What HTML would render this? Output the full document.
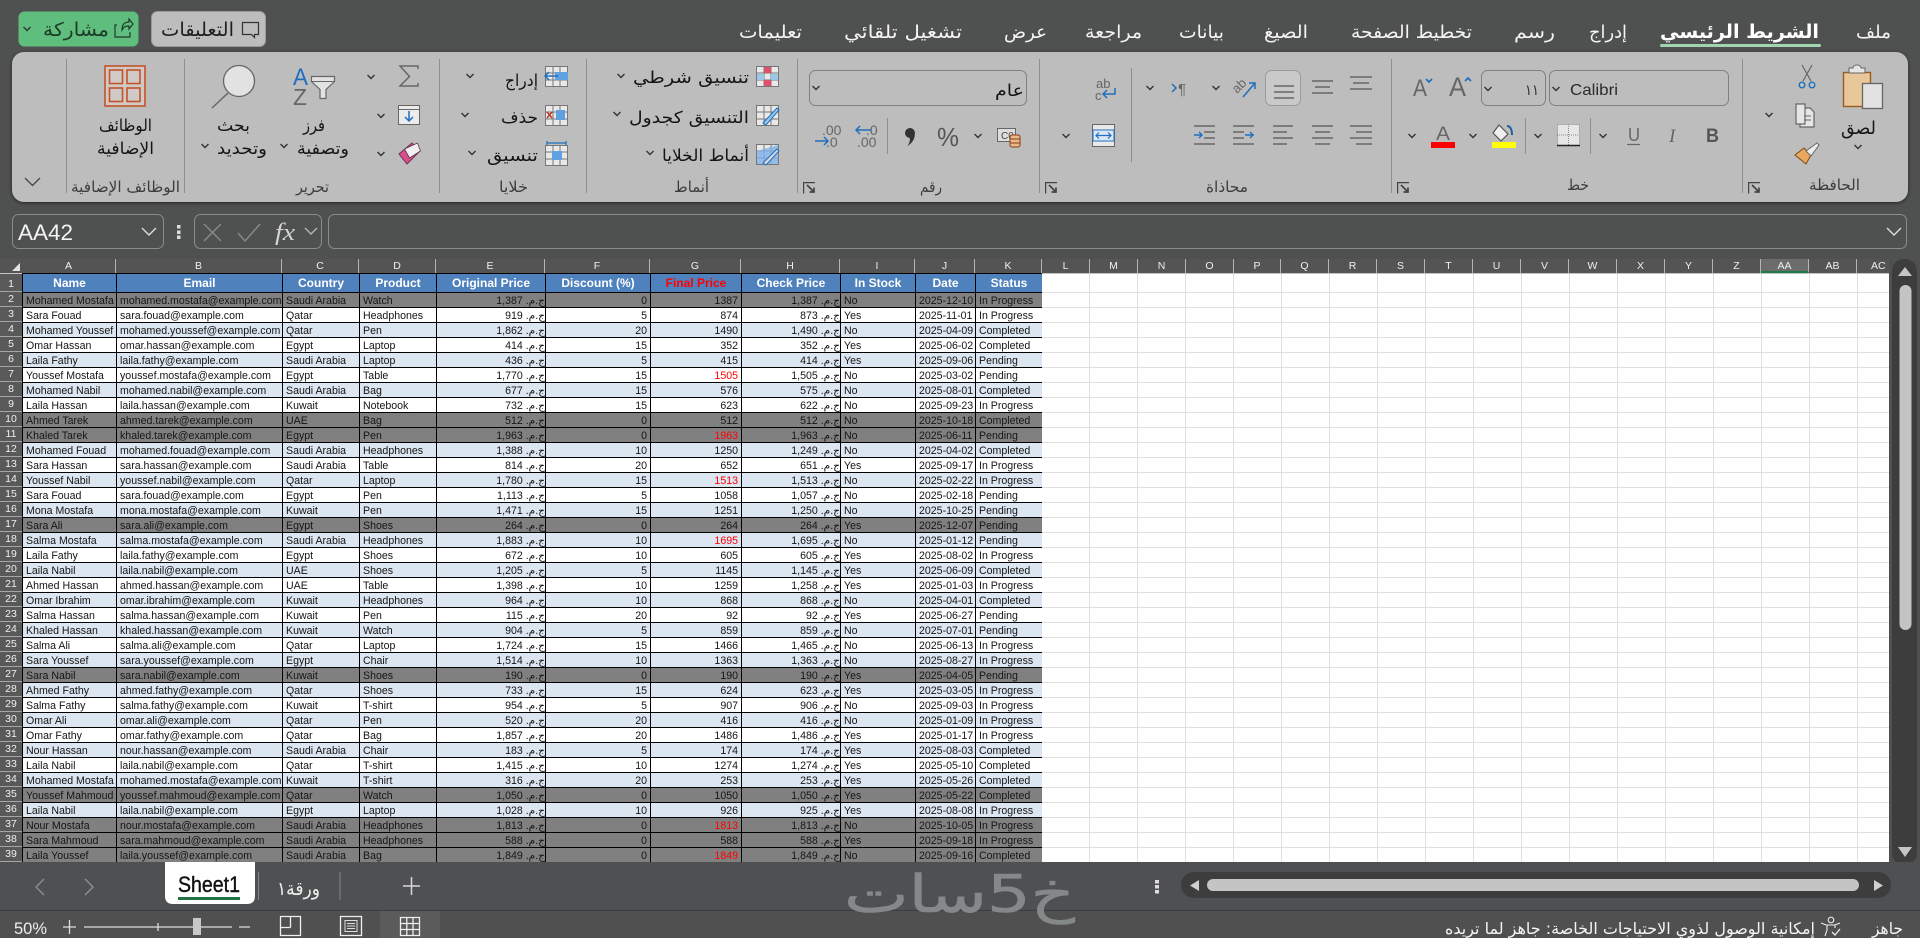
<!DOCTYPE html>
<html lang="ar"><head><meta charset="utf-8"><title>Excel</title>
<style>
html,body{margin:0;padding:0;width:1920px;height:938px;overflow:hidden;background:#4f5050;font-family:"Liberation Sans","DejaVu Sans",sans-serif}
#rib{position:absolute;left:12px;top:52px;width:1896px;height:150px;background:#bdbdbd;border-radius:12px;box-shadow:0 1px 3px #222}
svg{position:absolute;left:0;top:0}
svg text{font-family:"DejaVu Sans",sans-serif}
.w{fill:#f4f4f4;font-size:18px}.k{fill:#151515;font-size:16.5px}.s{fill:#3c3c3c;font-size:15px}
.la{font-family:"Liberation Sans",sans-serif!important}
#rows{position:absolute;left:1042px;top:273px;width:847px;height:589px;background-color:#fff;background-image:linear-gradient(90deg,#e0e0e0 1px,transparent 1px),linear-gradient(#fff,#fff),linear-gradient(#e0e0e0 1px,transparent 1px);background-size:48px 100%,100% 19px,100% 15px;background-position:47px 0,0 0,0 4px;background-repeat:repeat-x,no-repeat,repeat}
#hd{position:absolute;left:0;top:259px;height:14px;width:1889px;background:#545454;overflow:hidden;border-bottom:1px solid #c4c4c4;box-sizing:content-box}
#hd span{position:absolute;top:0;height:14px;line-height:14px;color:#f0f0f0;font-size:10.5px;text-align:center;border-right:1px solid #b5b5b5;box-sizing:border-box}
#rn{position:absolute;left:0;top:274px;width:22px;height:588px;overflow:hidden;background:#595959}
#rn i{display:block;height:15px;box-sizing:border-box;border-bottom:1px solid #a5a5a5;color:#f0f0f0;font:10.5px/15px "Liberation Sans",sans-serif;text-align:center}
#rn i:first-child{height:18px;line-height:20px}
#tw{position:absolute;left:22px;top:273px;width:1020px;height:589px;overflow:hidden}
table{border-collapse:collapse;table-layout:fixed;width:1020px;background:#fff;color:#151515;font:10.6px/12px "Liberation Sans","DejaVu Sans",sans-serif}
td,th{border:1px solid #000;padding:2px 2px 0 3px;height:12px;white-space:nowrap;overflow:hidden}
th{background:#4f81bd;color:#fff;font-size:12px;height:18px;padding:0 2px;line-height:18px;text-align:center;font-weight:bold}
tr{height:15px}
tr:first-child{height:19px}
tr:nth-child(even) td{background:#dce6f1}
tr.g td,tr:nth-child(even).g td{background:#808080}
td:nth-child(5),td:nth-child(8){direction:rtl;text-align:right;padding:2px 0 0 2px}
td:nth-child(6),td:nth-child(7){text-align:right;padding-right:3px}
.x{color:#f00}
</style></head><body>
<div id="rib"></div>

<div id="rows"></div>
<div id="hd">
<span style="left:22px;width:94px">A</span><span style="left:116px;width:166px">B</span><span style="left:282px;width:77px">C</span><span style="left:359px;width:77px">D</span><span style="left:436px;width:109px">E</span><span style="left:545px;width:105px">F</span><span style="left:650px;width:91px">G</span><span style="left:741px;width:99px">H</span><span style="left:840px;width:75px">I</span><span style="left:915px;width:60px">J</span><span style="left:975px;width:67px">K</span><span style="left:1042px;width:48px">L</span><span style="left:1090px;width:48px">M</span><span style="left:1138px;width:48px">N</span><span style="left:1186px;width:48px">O</span><span style="left:1234px;width:47px">P</span><span style="left:1281px;width:48px">Q</span><span style="left:1329px;width:48px">R</span><span style="left:1377px;width:48px">S</span><span style="left:1425px;width:48px">T</span><span style="left:1473px;width:48px">U</span><span style="left:1521px;width:48px">V</span><span style="left:1569px;width:48px">W</span><span style="left:1617px;width:48px">X</span><span style="left:1665px;width:48px">Y</span><span style="left:1713px;width:48px">Z</span><span style="left:1761px;width:48px;background:#6c6c6c;border-bottom:2px solid #1d7a45">AA</span><span style="left:1809px;width:48px">AB</span><span style="left:1857px;width:32px;text-align:left;padding-left:14px;border:0">AC</span>
</div>
<div id="rn"><i>1</i><i>2</i><i>3</i><i>4</i><i>5</i><i>6</i><i>7</i><i>8</i><i>9</i><i>10</i><i>11</i><i>12</i><i>13</i><i>14</i><i>15</i><i>16</i><i>17</i><i>18</i><i>19</i><i>20</i><i>21</i><i>22</i><i>23</i><i>24</i><i>25</i><i>26</i><i>27</i><i>28</i><i>29</i><i>30</i><i>31</i><i>32</i><i>33</i><i>34</i><i>35</i><i>36</i><i>37</i><i>38</i><i>39</i></div>
<div id="tw"><table>
<colgroup><col style="width:94px"><col style="width:166px"><col style="width:77px"><col style="width:77px"><col style="width:109px"><col style="width:105px"><col style="width:91px"><col style="width:99px"><col style="width:75px"><col style="width:60px"><col style="width:67px"></colgroup>
<tr><th>Name<th>Email<th>Country<th>Product<th>Original Price<th>Discount (%)<th style="color:#f00">Final Price<th>Check Price<th>In Stock<th>Date<th>Status
<tr class="g"><td>Mohamed Mostafa<td>mohamed.mostafa@example.com<td>Saudi Arabia<td>Watch<td>ج.م. 1,387<td>0<td>1387<td>ج.م. 1,387<td>No<td>2025-12-10<td>In Progress
<tr><td>Sara Fouad<td>sara.fouad@example.com<td>Qatar<td>Headphones<td>ج.م. 919<td>5<td>874<td>ج.م. 873<td>Yes<td>2025-11-01<td>In Progress
<tr><td>Mohamed Youssef<td>mohamed.youssef@example.com<td>Qatar<td>Pen<td>ج.م. 1,862<td>20<td>1490<td>ج.م. 1,490<td>No<td>2025-04-09<td>Completed
<tr><td>Omar Hassan<td>omar.hassan@example.com<td>Egypt<td>Laptop<td>ج.م. 414<td>15<td>352<td>ج.م. 352<td>Yes<td>2025-06-02<td>Completed
<tr><td>Laila Fathy<td>laila.fathy@example.com<td>Saudi Arabia<td>Laptop<td>ج.م. 436<td>5<td>415<td>ج.م. 414<td>Yes<td>2025-09-06<td>Pending
<tr><td>Youssef Mostafa<td>youssef.mostafa@example.com<td>Egypt<td>Table<td>ج.م. 1,770<td>15<td class="x">1505<td>ج.م. 1,505<td>No<td>2025-03-02<td>Pending
<tr><td>Mohamed Nabil<td>mohamed.nabil@example.com<td>Saudi Arabia<td>Bag<td>ج.م. 677<td>15<td>576<td>ج.م. 575<td>No<td>2025-08-01<td>Completed
<tr><td>Laila Hassan<td>laila.hassan@example.com<td>Kuwait<td>Notebook<td>ج.م. 732<td>15<td>623<td>ج.م. 622<td>No<td>2025-09-23<td>In Progress
<tr class="g"><td>Ahmed Tarek<td>ahmed.tarek@example.com<td>UAE<td>Bag<td>ج.م. 512<td>0<td>512<td>ج.م. 512<td>No<td>2025-10-18<td>Completed
<tr class="g"><td>Khaled Tarek<td>khaled.tarek@example.com<td>Egypt<td>Pen<td>ج.م. 1,963<td>0<td class="x">1963<td>ج.م. 1,963<td>No<td>2025-06-11<td>Pending
<tr><td>Mohamed Fouad<td>mohamed.fouad@example.com<td>Saudi Arabia<td>Headphones<td>ج.م. 1,388<td>10<td>1250<td>ج.م. 1,249<td>No<td>2025-04-02<td>Completed
<tr><td>Sara Hassan<td>sara.hassan@example.com<td>Saudi Arabia<td>Table<td>ج.م. 814<td>20<td>652<td>ج.م. 651<td>Yes<td>2025-09-17<td>In Progress
<tr><td>Youssef Nabil<td>youssef.nabil@example.com<td>Qatar<td>Laptop<td>ج.م. 1,780<td>15<td class="x">1513<td>ج.م. 1,513<td>No<td>2025-02-22<td>In Progress
<tr><td>Sara Fouad<td>sara.fouad@example.com<td>Egypt<td>Pen<td>ج.م. 1,113<td>5<td>1058<td>ج.م. 1,057<td>No<td>2025-02-18<td>Pending
<tr><td>Mona Mostafa<td>mona.mostafa@example.com<td>Kuwait<td>Pen<td>ج.م. 1,471<td>15<td>1251<td>ج.م. 1,250<td>No<td>2025-10-25<td>Pending
<tr class="g"><td>Sara Ali<td>sara.ali@example.com<td>Egypt<td>Shoes<td>ج.م. 264<td>0<td>264<td>ج.م. 264<td>Yes<td>2025-12-07<td>Pending
<tr><td>Salma Mostafa<td>salma.mostafa@example.com<td>Saudi Arabia<td>Headphones<td>ج.م. 1,883<td>10<td class="x">1695<td>ج.م. 1,695<td>No<td>2025-01-12<td>Pending
<tr><td>Laila Fathy<td>laila.fathy@example.com<td>Egypt<td>Shoes<td>ج.م. 672<td>10<td>605<td>ج.م. 605<td>Yes<td>2025-08-02<td>In Progress
<tr><td>Laila Nabil<td>laila.nabil@example.com<td>UAE<td>Shoes<td>ج.م. 1,205<td>5<td>1145<td>ج.م. 1,145<td>Yes<td>2025-06-09<td>Completed
<tr><td>Ahmed Hassan<td>ahmed.hassan@example.com<td>UAE<td>Table<td>ج.م. 1,398<td>10<td>1259<td>ج.م. 1,258<td>Yes<td>2025-01-03<td>In Progress
<tr><td>Omar Ibrahim<td>omar.ibrahim@example.com<td>Kuwait<td>Headphones<td>ج.م. 964<td>10<td>868<td>ج.م. 868<td>No<td>2025-04-01<td>Completed
<tr><td>Salma Hassan<td>salma.hassan@example.com<td>Kuwait<td>Pen<td>ج.م. 115<td>20<td>92<td>ج.م. 92<td>Yes<td>2025-06-27<td>Pending
<tr><td>Khaled Hassan<td>khaled.hassan@example.com<td>Kuwait<td>Watch<td>ج.م. 904<td>5<td>859<td>ج.م. 859<td>No<td>2025-07-01<td>Pending
<tr><td>Salma Ali<td>salma.ali@example.com<td>Qatar<td>Laptop<td>ج.م. 1,724<td>15<td>1466<td>ج.م. 1,465<td>No<td>2025-06-13<td>In Progress
<tr><td>Sara Youssef<td>sara.youssef@example.com<td>Egypt<td>Chair<td>ج.م. 1,514<td>10<td>1363<td>ج.م. 1,363<td>No<td>2025-08-27<td>In Progress
<tr class="g"><td>Sara Nabil<td>sara.nabil@example.com<td>Kuwait<td>Shoes<td>ج.م. 190<td>0<td>190<td>ج.م. 190<td>Yes<td>2025-04-05<td>Pending
<tr><td>Ahmed Fathy<td>ahmed.fathy@example.com<td>Qatar<td>Shoes<td>ج.م. 733<td>15<td>624<td>ج.م. 623<td>Yes<td>2025-03-05<td>In Progress
<tr><td>Salma Fathy<td>salma.fathy@example.com<td>Kuwait<td>T-shirt<td>ج.م. 954<td>5<td>907<td>ج.م. 906<td>No<td>2025-09-03<td>In Progress
<tr><td>Omar Ali<td>omar.ali@example.com<td>Qatar<td>Pen<td>ج.م. 520<td>20<td>416<td>ج.م. 416<td>No<td>2025-01-09<td>In Progress
<tr><td>Omar Fathy<td>omar.fathy@example.com<td>Qatar<td>Bag<td>ج.م. 1,857<td>20<td>1486<td>ج.م. 1,486<td>Yes<td>2025-01-17<td>In Progress
<tr><td>Nour Hassan<td>nour.hassan@example.com<td>Saudi Arabia<td>Chair<td>ج.م. 183<td>5<td>174<td>ج.م. 174<td>Yes<td>2025-08-03<td>Completed
<tr><td>Laila Nabil<td>laila.nabil@example.com<td>Qatar<td>T-shirt<td>ج.م. 1,415<td>10<td>1274<td>ج.م. 1,274<td>Yes<td>2025-05-10<td>Completed
<tr><td>Mohamed Mostafa<td>mohamed.mostafa@example.com<td>Kuwait<td>T-shirt<td>ج.م. 316<td>20<td>253<td>ج.م. 253<td>Yes<td>2025-05-26<td>Completed
<tr class="g"><td>Youssef Mahmoud<td>youssef.mahmoud@example.com<td>Qatar<td>Watch<td>ج.م. 1,050<td>0<td>1050<td>ج.م. 1,050<td>Yes<td>2025-05-22<td>Completed
<tr><td>Laila Nabil<td>laila.nabil@example.com<td>Egypt<td>Laptop<td>ج.م. 1,028<td>10<td>926<td>ج.م. 925<td>Yes<td>2025-08-08<td>In Progress
<tr class="g"><td>Nour Mostafa<td>nour.mostafa@example.com<td>Saudi Arabia<td>Headphones<td>ج.م. 1,813<td>0<td class="x">1813<td>ج.م. 1,813<td>No<td>2025-10-05<td>In Progress
<tr class="g"><td>Sara Mahmoud<td>sara.mahmoud@example.com<td>Saudi Arabia<td>Headphones<td>ج.م. 588<td>0<td>588<td>ج.م. 588<td>Yes<td>2025-09-18<td>In Progress
<tr class="g"><td>Laila Youssef<td>laila.youssef@example.com<td>Saudi Arabia<td>Bag<td>ج.م. 1,849<td>0<td class="x">1849<td>ج.م. 1,849<td>No<td>2025-09-16<td>Completed
</table></div>

<svg width="1920" height="938" viewBox="0 0 1920 938" xmlns="http://www.w3.org/2000/svg">
<defs>
<path id="c" d="M-3.5-2L0 1.5 3.5-2" fill="none" stroke="#333" stroke-width="1.4"/>
<g id="l" fill="none" stroke="#444" stroke-width="1.2"><path d="M.6 11.5V.6H12"/><path d="M4 3l7 7M11 5.5V10H6.5" stroke-width="1.7"/></g>
<g id="g"><rect x=".5" y=".5" width="22" height="20" fill="#e9e9e9" stroke="#777"/><path d="M8 .5v20M15 .5v20M.5 7h22M.5 14h22" stroke="#777" fill="none"/></g>
</defs>

<!-- top buttons -->
<rect x="18.5" y="11.5" width="120" height="35" rx="6" fill="#5fbd7d"/>
<use href="#c" x="27" y="29"/>
<text x="43" y="36" textLength="66" lengthAdjust="spacingAndGlyphs" font-size="19" fill="#1e3a28">مشاركة</text>
<path d="M117 25h-2v12h15v-5M122 30c0-6 3-8 7-8v-3l4 5-4 5v-3c-4 0-5 1-7 4z" fill="none" stroke="#1e3a28" stroke-width="1.2"/>
<rect x="151.5" y="11.5" width="114" height="35" rx="6" fill="#bdbdbd" stroke="#999"/>
<text x="161" y="36" textLength="73" lengthAdjust="spacingAndGlyphs" font-size="19" fill="#1f1f1f">التعليقات</text>
<path d="M242.5 22.5h16v12h-4v3l-3-3h-9z" fill="none" stroke="#333" stroke-width="1.2"/>

<!-- tabs -->
<text class="w" x="1856" y="38" textLength="35" lengthAdjust="spacingAndGlyphs">ملف</text>
<text class="w" x="1660" y="38" textLength="159" lengthAdjust="spacingAndGlyphs" font-weight="bold" style="fill:#fff;font-size:19px">الشريط الرئيسي</text>
<rect x="1660" y="44" width="161" height="3" rx="1.5" fill="#9fd5b0"/>
<text class="w" x="1589" y="38" textLength="38" lengthAdjust="spacingAndGlyphs">إدراج</text>
<text class="w" x="1514" y="38" textLength="41" lengthAdjust="spacingAndGlyphs">رسم</text>
<text class="w" x="1351" y="38" textLength="121" lengthAdjust="spacingAndGlyphs">تخطيط الصفحة</text>
<text class="w" x="1264" y="38" textLength="44" lengthAdjust="spacingAndGlyphs">الصيغ</text>
<text class="w" x="1179" y="38" textLength="45" lengthAdjust="spacingAndGlyphs">بيانات</text>
<text class="w" x="1085" y="38" textLength="57" lengthAdjust="spacingAndGlyphs">مراجعة</text>
<text class="w" x="1004" y="38" textLength="43" lengthAdjust="spacingAndGlyphs">عرض</text>
<text class="w" x="844" y="38" textLength="118" lengthAdjust="spacingAndGlyphs">تشغيل تلقائي</text>
<text class="w" x="739" y="38" textLength="63" lengthAdjust="spacingAndGlyphs">تعليمات</text>

<!-- separators -->
<g stroke="#8e8e8e" fill="none"><path d="M66.5 59v134M184.5 59v134M439.5 59v134M586.5 59v134M797.5 59v134M1039.5 59v134M1391.5 59v134M1742.5 59v134M1131.5 68v94M887.5 118v36M1525.5 118v36M1590.5 118v36"/></g>

<!-- group labels -->
<g>
<text class="s" x="71" y="192" textLength="109" lengthAdjust="spacingAndGlyphs">الوظائف الإضافية</text>
<text class="s" x="296" y="192" textLength="33" lengthAdjust="spacingAndGlyphs">تحرير</text>
<text class="s" x="499" y="192" textLength="29" lengthAdjust="spacingAndGlyphs">خلايا</text>
<text class="s" x="674" y="192" textLength="35" lengthAdjust="spacingAndGlyphs">أنماط</text>
<text class="s" x="920" y="192" textLength="22" lengthAdjust="spacingAndGlyphs">رقم</text>
<text class="s" x="1206" y="192" textLength="42" lengthAdjust="spacingAndGlyphs">محاذاة</text>
<text class="s" x="1567" y="190" textLength="22" lengthAdjust="spacingAndGlyphs">خط</text>
<text class="s" x="1809" y="190" textLength="51" lengthAdjust="spacingAndGlyphs">الحافظة</text>
</g>
<use href="#l" x="803" y="182"/><use href="#l" x="1045" y="182"/><use href="#l" x="1397" y="182"/><use href="#l" x="1748" y="182"/>
<path d="M25 178l7.5 7.5L40 178" fill="none" stroke="#444" stroke-width="1.3"/>

<!-- add-ins -->
<g fill="none" stroke="#c4522c" stroke-width="1.6"><rect x="105" y="66" width="40" height="40" fill="#cfcac5"/><rect x="109.5" y="70" width="13" height="13.5"/><rect x="127" y="70" width="13" height="13.5"/><rect x="109.5" y="88" width="13" height="13.5"/><rect x="127" y="88" width="13" height="13.5"/></g>
<text class="k" x="99" y="131" textLength="53" lengthAdjust="spacingAndGlyphs">الوظائف</text>
<text class="k" x="97" y="154" textLength="57" lengthAdjust="spacingAndGlyphs">الإضافية</text>

<!-- find -->
<ellipse cx="239" cy="81" rx="15.5" ry="15.5" fill="#e2e2e2" stroke="#666" stroke-width="1.3"/>
<path d="M228 93L212 108" stroke="#666" stroke-width="1.5"/>
<text class="k" x="217" y="131" textLength="33" lengthAdjust="spacingAndGlyphs">بحث</text>
<text class="k" x="217" y="154" textLength="50" lengthAdjust="spacingAndGlyphs">وتحديد</text>
<use href="#c" x="205" y="146"/>
<!-- sort -->
<text class="la" x="293" y="85" font-size="24" fill="#1f6fbf" textLength="15" lengthAdjust="spacingAndGlyphs">A</text>
<text class="la" x="293" y="105" font-size="23" fill="#666" textLength="14" lengthAdjust="spacingAndGlyphs">Z</text>
<path d="M311.5 76.5h23v5l-8.5 8v9h-6v-9l-8.500-8z" fill="#e2e2e2" stroke="#666" stroke-width="1.2"/>
<path d="M311.500 81.500h23" stroke="#666"/>
<text class="k" x="303" y="131" textLength="22" lengthAdjust="spacingAndGlyphs">فرز</text>
<text class="k" x="297" y="154" textLength="52" lengthAdjust="spacingAndGlyphs">وتصفية</text>
<use href="#c" x="284" y="146"/>
<!-- sigma etc -->
<path d="M418 69v-3h-18l9.500 10.500L400 86h18v-3" fill="none" stroke="#666" stroke-width="1.5"/>
<use href="#c" x="371" y="77"/>
<rect x="398.500" y="105.500" width="21" height="19" fill="#ececec" stroke="#666"/><path d="M398.500 109.500h21" stroke="#666"/><path d="M409 111v10M405 117l4 4 4-4" fill="none" stroke="#1f6fbf" stroke-width="1.5"/>
<use href="#c" x="381" y="116"/>
<path d="M399 154l13-11 8 8-13 13z" fill="#d94f8a" stroke="#6b3050"/><path d="M404.500 149l13-6 3 8-11 7z" fill="#f0f0f0" stroke="#6b3050" stroke-width=".8"/>
<use href="#c" x="381" y="154"/>

<!-- cells -->
<use href="#g" x="545" y="66"/><rect x="555" y="72" width="13" height="8" fill="#5ea0e0"/><path d="M545 76h13M549 72l-4 4 4 4" fill="none" stroke="#1f6fbf" stroke-width="1.5"/>
<text class="k" x="505" y="86" textLength="33" lengthAdjust="spacingAndGlyphs">إدراج</text><use href="#c" x="470" y="76"/>
<use href="#g" x="545" y="105"/><rect x="556" y="110" width="9" height="10" fill="#5ea0e0"/><path d="M547 112l5 6M552 112l-5 6" stroke="#c03020" stroke-width="1.4"/>
<text class="k" x="501" y="123" textLength="37" lengthAdjust="spacingAndGlyphs">حذف</text><use href="#c" x="465" y="115"/>
<use href="#g" x="545" y="145"/><rect x="552" y="151" width="10" height="9" fill="#5ea0e0"/><path d="M547 143h19M547 141v4M566 141v4" stroke="#1f6fbf" stroke-width="1.2" fill="none"/>
<text class="k" x="487" y="161" textLength="51" lengthAdjust="spacingAndGlyphs">تنسيق</text><use href="#c" x="472" y="153"/>

<!-- styles -->
<use href="#g" x="756" y="66"/><rect x="764" y="67" width="7" height="6" fill="#e0506a"/><rect x="764" y="80" width="7" height="6" fill="#e0506a"/><rect x="757" y="74" width="7" height="6" fill="#9ac8ea"/><rect x="771" y="74" width="7" height="6" fill="#9ac8ea"/>
<text class="k" x="633" y="83" textLength="116" lengthAdjust="spacingAndGlyphs">تنسيق شرطي</text><use href="#c" x="621" y="76"/>
<use href="#g" x="756" y="105"/><path d="M763 123l14-15 2 2-13 15z" fill="#9ac8ea" stroke="#1f6fbf"/>
<text class="k" x="629" y="123" textLength="120" lengthAdjust="spacingAndGlyphs">التنسيق كجدول</text><use href="#c" x="617" y="114"/>
<use href="#g" x="756" y="144"/><path d="M757 151l21-6v19h-21z" fill="#7fb0e8" opacity=".8"/><path d="M763 163l14-14 2 2-13 14z" fill="#dcdcdc" stroke="#1f6fbf"/>
<text class="k" x="662" y="161" textLength="87" lengthAdjust="spacingAndGlyphs">أنماط الخلايا</text><use href="#c" x="650" y="153"/>

<!-- number -->
<rect x="809.500" y="70.500" width="217" height="35" rx="6" fill="none" stroke="#808080"/>
<text class="k" x="995" y="96" textLength="29" lengthAdjust="spacingAndGlyphs">عام</text><use href="#c" x="816" y="88"/>
<g fill="#666"><text class="la" x="822" y="135" font-size="14">.00</text><text class="la" x="826" y="147" font-size="14">.0</text><text class="la" x="866" y="135" font-size="14">.0</text><text class="la" x="857" y="147" font-size="14">.00</text></g>
<path d="M815 141h13M824 137l4 4-4 4M871 130h-15M860 126l-4 4 4 4" fill="none" stroke="#1f6fbf" stroke-width="1.5"/>
<circle cx="910" cy="133" r="5" fill="#333"/><path d="M914.500 133c1 5-2 10-7 13 2-3 3-6 2-9z" fill="#333"/>
<text class="la" x="937" y="146" font-size="26" fill="#555" textLength="22" lengthAdjust="spacingAndGlyphs">%</text>
<use href="#c" x="978" y="136"/>
<rect x="997.500" y="128.500" width="18" height="13" fill="#ddd" stroke="#666"/><text class="la" x="1001" y="139" font-size="10" fill="#444">C0</text>
<rect x="1010" y="135" width="10" height="12" rx="2" fill="#e8b98a" stroke="#8a3a10"/><path d="M1010 139h10M1010 143h10" stroke="#8a3a10"/>

<!-- alignment -->
<text class="la" x="1096" y="88" font-size="13" fill="#666">ab</text><text class="la" x="1095" y="100" font-size="13" fill="#666">c</text>
<path d="M1115 88v6h-12M1107 90l-4 4 4 4" fill="none" stroke="#1f6fbf" stroke-width="1.5"/>
<rect x="1092.500" y="124.500" width="22" height="22" fill="#e9e9e9" stroke="#666"/><rect x="1093" y="130" width="21" height="11" fill="#dbe7f5" stroke="#1f6fbf"/><path d="M1096 135.500h15M1099 132.500l-3 3 3 3M1108 132.500l3 3-3 3" fill="none" stroke="#1f6fbf" stroke-width="1.2"/>
<use href="#c" x="1066" y="136"/><use href="#c" x="1150" y="88"/><use href="#c" x="1216" y="88"/>
<path d="M1172 84l4 4-4 4" fill="none" stroke="#1f6fbf" stroke-width="1.5"/>
<text class="la" x="1178" y="94" font-size="15" fill="#666">¶</text>
<text class="la" transform="translate(1237 94) rotate(-45)" font-size="13" fill="#666">ab</text>
<path d="M1243 97l12-14M1249 83h6v6" fill="none" stroke="#1f6fbf" stroke-width="1.5"/>
<rect x="1265.500" y="70.500" width="35" height="35" rx="6" fill="#c9c9c9" stroke="#9b9b9b"/>
<g stroke="#666" stroke-width="1.500" fill="none">
<path d="M1274 86h20M1274 92h20M1274 98h20"/>
<path d="M1312 81h21M1315 87h15M1312 93h21"/>
<path d="M1350 77h22M1353 83h16M1350 89h22"/>
<path d="M1273 126h20M1273 132h14M1273 138h20M1273 144h14"/>
<path d="M1312 126h21M1315 132h15M1312 138h21M1315 144h15"/>
<path d="M1350 126h22M1356 132h16M1350 138h22M1356 144h16"/>
<path d="M1194 126h21M1204 132h11M1204 138h11M1194 144h21"/>
<path d="M1233 126h21M1233 132h11M1233 138h11M1233 144h21"/>
</g>
<path d="M1194 135h8M1199 132l3 3-3 3M1245 135h9M1250 132l3 3-3 3" fill="none" stroke="#1f6fbf" stroke-width="1.4"/>

<!-- font -->
<rect x="1549.500" y="70.500" width="179" height="35" rx="6" fill="none" stroke="#808080"/>
<rect x="1481.500" y="70.500" width="64" height="35" rx="6" fill="none" stroke="#808080"/>
<use href="#c" x="1556" y="89"/><use href="#c" x="1488" y="89"/>
<text class="la" x="1570" y="95" font-size="16" fill="#2b2b2b" textLength="48" lengthAdjust="spacingAndGlyphs">Calibri</text>
<text x="1525" y="95" font-size="15" fill="#333" textLength="14" lengthAdjust="spacingAndGlyphs">١١</text>
<text class="la" x="1413" y="96" font-size="24" fill="#666" textLength="14" lengthAdjust="spacingAndGlyphs">A</text>
<path d="M1426 79l3 3 3-3" fill="none" stroke="#1f6fbf" stroke-width="1.7"/>
<text class="la" x="1449" y="96" font-size="27" fill="#666" textLength="17" lengthAdjust="spacingAndGlyphs">A</text>
<path d="M1465 81l3-3 3 3" fill="none" stroke="#1f6fbf" stroke-width="1.7"/>
<text class="la" x="1706" y="142" font-size="19" font-weight="bold" fill="#555" textLength="13" lengthAdjust="spacingAndGlyphs">B</text>
<text x="1669" y="142" font-size="19" font-style="italic" fill="#666" style="font-family:'Liberation Serif',serif">I</text>
<text class="la" x="1628" y="141" font-size="18" fill="#666" textLength="12" lengthAdjust="spacingAndGlyphs">U</text><path d="M1627 144.500h13" stroke="#666" stroke-width="1.200"/>
<use href="#c" x="1603" y="136"/>
<rect x="1557.500" y="124.500" width="22" height="21" fill="#e6e6e6" stroke="#888" stroke-dasharray="1 1"/><path d="M1568.500 124v21M1557 135h22" stroke="#888" stroke-dasharray="1 1"/><path d="M1557 145.500h23" stroke="#222" stroke-width="1.500"/>
<use href="#c" x="1538" y="136"/>
<path d="M1499 125l9 9-7 7-8-8z" fill="#eee" stroke="#555" stroke-width="1.200"/><path d="M1507 126c3 0 5 3 5 9" fill="none" stroke="#1f5f9f" stroke-width="2"/>
<rect x="1492" y="142" width="24" height="6" fill="#ff0"/>
<use href="#c" x="1473" y="136"/>
<text class="la" x="1436" y="140" font-size="19" fill="#666" textLength="14" lengthAdjust="spacingAndGlyphs">A</text>
<rect x="1431" y="142" width="24" height="6" fill="#f00"/>
<use href="#c" x="1412" y="136"/>

<!-- clipboard -->
<rect x="1843.500" y="72.500" width="27" height="34" fill="#e8c79a" stroke="#9a5a20" stroke-width="1.400"/>
<path d="M1849 72v-4h4c0-4 8-4 8 0h4v5h-16z" fill="#e6e6e6" stroke="#666"/>
<rect x="1862.500" y="83.500" width="20" height="25" fill="#e2e2e2" stroke="#666" stroke-width="1.300"/>
<text class="k" x="1841" y="134" textLength="35" lengthAdjust="spacingAndGlyphs" style="font-size:18px">لصق</text>
<use href="#c" x="1858" y="147"/>
<path d="M1802 65l9 16M1812 65l-9 16" stroke="#666" stroke-width="1.200" fill="none"/><circle cx="1802" cy="85" r="2.800" fill="none" stroke="#1f6fbf" stroke-width="1.400"/><circle cx="1812" cy="85" r="2.800" fill="none" stroke="#1f6fbf" stroke-width="1.400"/>
<path d="M1796 104h9v20h-9zM1805 108h5l4 4v15h-14v-3" fill="#e6e6e6" stroke="#666" stroke-width="1.200"/><path d="M1804 116h7M1804 120h7" stroke="#666"/>
<path d="M1795 155l9-7 7 7-5 9z" fill="#e8a860" stroke="#7a4a10"/><path d="M1806 151l11-8 2 2-8 11z" fill="#eee" stroke="#666"/>
<use href="#c" x="1769" y="115"/>

<!-- formula bar -->
<rect x="12.500" y="214.500" width="151" height="34" rx="6" fill="none" stroke="#8b8b8b"/>
<text class="la" x="18" y="240" font-size="22" fill="#f4f4f4" textLength="55" lengthAdjust="spacingAndGlyphs">AA42</text>
<path d="M142 228l7 7 7-7" fill="none" stroke="#ddd" stroke-width="1.400"/>
<g fill="#ddd"><rect x="177" y="225" width="3.500" height="3.500"/><rect x="177" y="230.500" width="3.500" height="3.500"/><rect x="177" y="235.500" width="3.500" height="3.500"/></g>
<rect x="194.500" y="214.500" width="127" height="34" rx="6" fill="none" stroke="#8b8b8b"/>
<path d="M204 224l17 17M221 224l-17 17" stroke="#8a8a8a" stroke-width="1.400"/>
<path d="M238 233l7 8 15-17" fill="none" stroke="#8a8a8a" stroke-width="1.400"/>
<text x="275" y="240" font-size="24" font-style="italic" fill="#d4d4d4" style="font-family:'Liberation Serif',serif" textLength="20" lengthAdjust="spacingAndGlyphs">fx</text>
<path d="M305 228l6 6 6-6" fill="none" stroke="#bbb" stroke-width="1.300"/>
<rect x="328.500" y="214.500" width="1578" height="34" rx="6" fill="none" stroke="#8b8b8b"/>
<path d="M1887 228l7 7 7-7" fill="none" stroke="#ddd" stroke-width="1.400"/>
<path d="M20 263v8h-8z" fill="#e4e4e4"/>

<!-- vertical scroll -->
<rect x="1892" y="259" width="25" height="606" rx="12" fill="#3d3d3d"/>
<path d="M1905 267l7 9h-14z" fill="#c6c6c6"/>
<rect x="1899.500" y="285" width="12" height="345" rx="6" fill="#c4c4c4"/>
<path d="M1898 847h14l-7 10z" fill="#c6c6c6"/>

<!-- bottom strip -->
<rect x="0" y="862" width="1920" height="48" fill="#4e5052"/>
<rect x="0" y="910" width="1920" height="28" fill="#505050"/>
<path d="M0 910.500h1920" stroke="#3c3c3c"/>
<path d="M165 862h90v34q0 8-8 8h-74q-8 0-8-8z" fill="#fff"/>
<text class="la" x="178" y="892" font-size="22" fill="#111" stroke="#111" stroke-width=".4" textLength="62" lengthAdjust="spacingAndGlyphs">Sheet1</text>
<rect x="178" y="897" width="62" height="3" fill="#217346"/>
<path d="M258.500 872v28M340 872v28" stroke="#848484"/>
<text x="277" y="895" font-size="19" fill="#eee" textLength="43" lengthAdjust="spacingAndGlyphs">ورقة١</text>
<path d="M403 886h17M411.500 877v18" stroke="#d8d8d8" stroke-width="1.500"/>
<path d="M44 879l-8 8 8 8M85 879l8 8-8 8" fill="none" stroke="#8f8f8f" stroke-width="1.400"/>
<text x="844" y="912" font-size="52" fill="#858888" stroke="#858888" stroke-width=".6" textLength="231" lengthAdjust="spacingAndGlyphs">خ5سات</text>
<g fill="#ddd"><rect x="1155" y="880" width="4" height="3.500"/><rect x="1155" y="885" width="4" height="3.500"/><rect x="1155" y="890" width="4" height="3.500"/></g>
<rect x="1181" y="872" width="710" height="26" rx="13" fill="#3d3d3d"/>
<path d="M1199 880v11l-9-5.500z" fill="#d0d0d0"/>
<rect x="1207" y="879" width="652" height="12" rx="6" fill="#c4c4c4"/>
<path d="M1874 880v11l9-5.500z" fill="#d0d0d0"/>

<!-- status bar -->
<rect x="380" y="911" width="60" height="27" fill="#5b5b5b"/>
<text class="la" x="14" y="934" font-size="17" fill="#eee" textLength="33" lengthAdjust="spacingAndGlyphs">50%</text>
<path d="M63 927h13M69.500 920v14M84 927h148M158 923v8M239 927h11" stroke="#ddd" stroke-width="1.300"/>
<rect x="193" y="918" width="8" height="17" fill="#c8c8c8"/>
<path d="M280.500 916.500h20v19h-20zM280.500 927.500h10M290.500 916.500v11" fill="none" stroke="#eee" stroke-width="1.300"/>
<path d="M340.500 916.500h21v19h-21z" fill="none" stroke="#eee" stroke-width="1.300"/><path d="M345 920.500h12v11h-12zM347 923.500h8M347 926h8M347 928.500h8" fill="none" stroke="#ddd"/>
<path d="M400.500 917.500h19v18h-19zM406.800 917.500v18M413 917.500v18M400.500 923.500h19M400.500 929.500h19" fill="none" stroke="#eee" stroke-width="1.300"/>
<text class="w" x="1872" y="934" textLength="31" lengthAdjust="spacingAndGlyphs" style="font-size:16px">جاهز</text>
<circle cx="1831" cy="920" r="2.800" fill="none" stroke="#eee" stroke-width="1.100"/>
<path d="M1821 923l5 2h9l5-2M1827 925v5l-2 6M1835 925v3" fill="none" stroke="#eee" stroke-width="1.100"/><path d="M1832 932l3 3 5-6" fill="none" stroke="#eee" stroke-width="1.300"/>
<text class="w" x="1445" y="934" textLength="370" lengthAdjust="spacingAndGlyphs" style="font-size:16px">إمكانية الوصول لذوي الاحتياجات الخاصة: جاهز لما تريده</text>
</svg>
</body></html>
